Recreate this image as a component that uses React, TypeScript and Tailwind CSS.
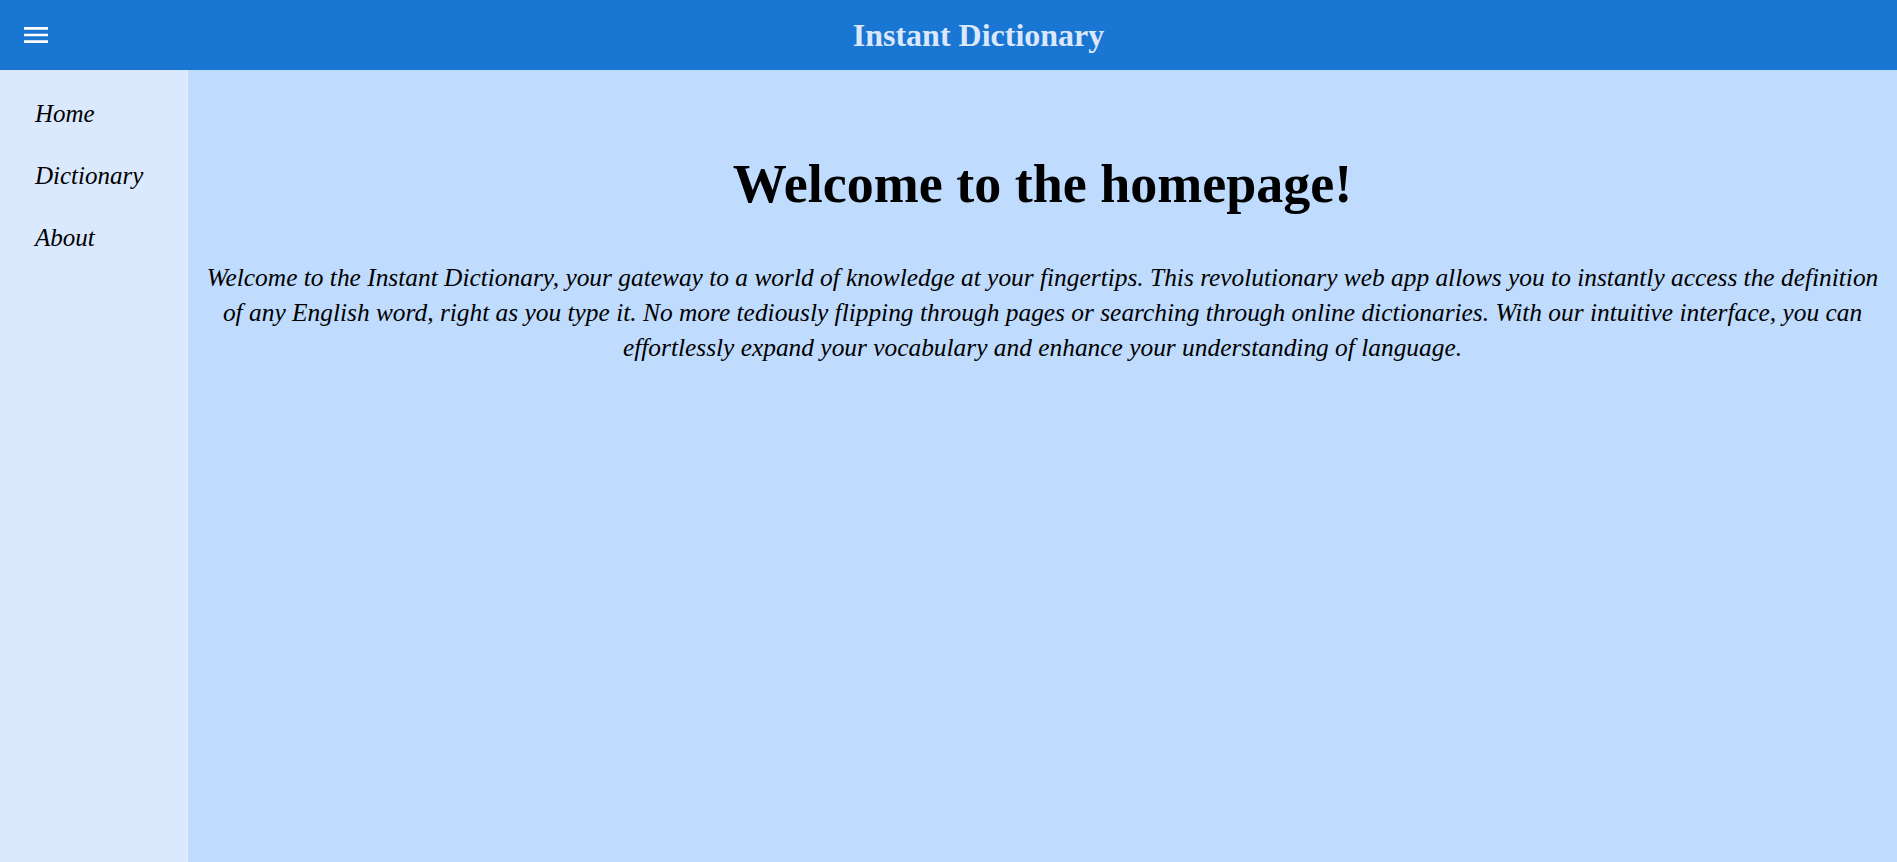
import { FunctionComponent } from "react";

const navItems = ["Home", "Dictionary", "About"];

const MenuIcon: FunctionComponent = (): JSX.Element => (
  <svg width="32" height="32" viewBox="0 0 24 24" fill="white">
    <path d="M3 18h18v-2H3zm0-5h18v-2H3zm0-7v2h18V6z" />
  </svg>
);

const App: FunctionComponent = (): JSX.Element => {
  return (
    <div
      className="relative w-full h-screen flex flex-col overflow-hidden"
      style={{ fontFamily: '"Liberation Serif", "Times New Roman", serif' }}
    >
      <header className="relative w-full h-[70px] shrink-0 flex items-center bg-[#1976d2]">
        <button className="relative w-[60px] h-full flex items-center pl-5 cursor-pointer">
          <MenuIcon />
        </button>
        <div className="relative flex-1 flex items-center justify-center text-[32px] font-bold text-[#dbe7fb]">
          Instant Dictionary
        </div>
      </header>
      <div className="relative w-full flex-1 flex">
        <nav className="relative w-[188px] h-full shrink-0 flex flex-col pt-[13px] bg-[#dbe9fe] border-r border-[#e4eefe]">
          {navItems.map((item) => (
            <a
              key={item}
              className="relative w-full h-[62px] flex items-center pl-[35px] text-[25px] italic text-black cursor-pointer"
            >
              {item}
            </a>
          ))}
        </nav>
        <main className="relative flex-1 h-full flex flex-col items-center px-3 pt-[84px] bg-[#bfdbfe]">
          <h1 className="relative w-full text-center text-[54px] leading-[60px] font-bold text-black">
            Welcome to the homepage!
          </h1>
          <p className="relative w-full mt-[46px] text-center text-[25.4px] leading-[35px] italic text-black">
            Welcome to the Instant Dictionary, your gateway to a world of
            knowledge at your fingertips. This revolutionary web app allows you
            to instantly access the definition of any English word, right as
            you type it. No more tediously flipping through pages or searching
            through online dictionaries. With our intuitive interface, you can
            effortlessly expand your vocabulary and enhance your understanding
            of language.
          </p>
        </main>
      </div>
    </div>
  );
};

export default App;
